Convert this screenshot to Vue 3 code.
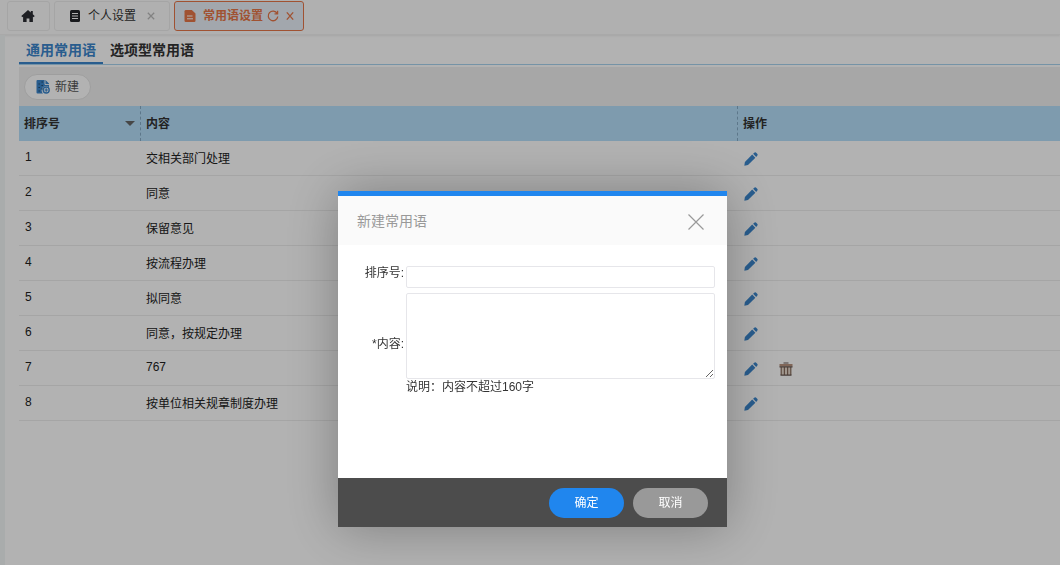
<template>
  <div class="page">
    <nav class="topbar">
      <a href="#" class="page-tab home" aria-label="首页">
        <svg width="14" height="14" viewBox="0 0 14 14">
          <path d="M7 1 L0.3 7 L1.3 8.2 L2.1 7.6 V13 H5.6 V9.4 H8.4 V13 H11.9 V7.6 L12.7 8.2 L13.7 7 L11.8 5.2 V2 H9.8 V3.5 Z" fill="#2b2d33" />
        </svg>
      </a>
      <div class="page-tab">
        <svg class="doc" width="12" height="12" viewBox="0 0 12 12">
          <rect x="1" y="0" width="10" height="12" rx="1.5" fill="#25272b" />
          <path d="M3 3.5H9M3 6H9M3 8.5H9" stroke="#fff" stroke-width="1" />
        </svg>
        <a href="#">个人设置</a>
        <button type="button" class="tab-btn muted" aria-label="关闭">
          <svg width="8" height="8" viewBox="0 0 8 8"><path d="M0.8 0.8L7.2 7.2M7.2 0.8L0.8 7.2" /></svg>
        </button>
      </div>
      <div class="page-tab current">
        <svg class="doc" width="12" height="12" viewBox="0 0 12 12">
          <path d="M2 0H7.8L11.5 3.5V10.8Q11.5 12 10.3 12H1.7Q0.5 12 0.5 10.8V1.2Q0.5 0 2 0Z" fill="#e67648" />
          <path d="M3 6H8.5M3 8.8H9" stroke="#fff" stroke-width="1" />
        </svg>
        <a href="#">常用语设置</a>
        <button type="button" class="tab-btn refresh" aria-label="刷新">
          <svg width="12" height="12" viewBox="0 0 12 12">
            <path d="M10.2 3.5A4.8 4.8 0 1 0 10.8 6.5M10.6 0.8V3.9H7.5" />
          </svg>
        </button>
        <button type="button" class="tab-btn" aria-label="关闭">
          <svg width="8" height="8" viewBox="0 0 8 8"><path d="M0.8 0.4L7.2 7.6M7.2 0.4L0.8 7.6" /></svg>
        </button>
      </div>
    </nav>

    <main class="content">
      <div class="sub-tabs">
        <a
          v-for="tab in tabs"
          :key="tab"
          href="#"
          :class="{ active: tab === activeTab }"
          @click.prevent="activeTab = tab"
        >{{ tab }}</a>
      </div>

      <div class="toolbar">
        <button type="button" class="create" @click="showDialog = true">
          <svg width="14" height="14" viewBox="0 0 14 14">
            <path d="M1.5 0H9.5L13 3.5V7.2A4 4 0 0 0 7 13.6H1.5Q0.5 13.6 0.5 12.6V1Q0.5 0 1.5 0Z" fill="#3b86cc" />
            <path d="M9 0V4.5H13" fill="none" stroke="#fff" stroke-width="0.9" />
            <path d="M2.5 4H3.8M5.5 5.5H6.8M2.5 7.5H3.8M5.5 9H6.8M2.5 11H3.8M5.5 2H6.8" stroke="#20435f" stroke-width="1.2" />
            <circle cx="10.2" cy="10" r="3" fill="#fff" stroke="#3b86cc" stroke-width="1.4" />
            <path d="M10.2 8.3V11.7M8.5 10H11.9" stroke="#3b86cc" stroke-width="1.2" />
          </svg>
          新建
        </button>
      </div>

      <table class="phrases">
        <colgroup>
          <col class="col-order" />
          <col />
          <col class="col-actions" />
        </colgroup>
        <thead>
          <tr>
            <th>
              <div class="sortable">排序号<span class="caret"></span></div>
            </th>
            <th>内容</th>
            <th>操作</th>
          </tr>
        </thead>
        <tbody>
          <tr v-for="row in rows" :key="row.order">
            <td class="latin">{{ row.order }}</td>
            <td :class="{ latin: row.removable }">{{ row.text }}</td>
            <td>
              <div class="actions">
                <button type="button" aria-label="编辑">
                  <svg width="14" height="14" viewBox="0 0 14 14" fill="#3b86cc">
                    <path d="M0.3 13.7L0.9 9.9L8.2 2.6L11.4 5.8L4 13.1Z" />
                    <path d="M9.1 1.8L10.6 0.6Q11.5 0 12.2 0.7L13.4 1.9Q14 2.6 13.4 3.4L12.2 4.9Z" />
                  </svg>
                </button>
                <button v-if="row.removable" type="button" aria-label="删除">
                  <svg width="14" height="14" viewBox="0 0 14 14">
                    <path d="M2 5H12V13H2Z" fill="#e6d8cc" />
                    <path d="M2.2 5V13M5.4 5V13M8.6 5V13M11.8 5V13" stroke="#866b5c" stroke-width="1.2" />
                    <path d="M0.5 2H13.5V4.4H0.5Z" fill="#b8937f" />
                    <path d="M4.5 1H9.5M0.5 4.8H13.5M1.5 13.2H12.5" stroke="#66564f" stroke-width="1.2" />
                  </svg>
                </button>
              </div>
            </td>
          </tr>
        </tbody>
      </table>
    </main>

    <div v-if="showDialog" class="mask">
      <form class="dialog" role="dialog" aria-labelledby="dialog-title" @submit.prevent="save">
        <header class="dialog-head">
          <h2 id="dialog-title">新建常用语</h2>
          <button type="button" class="close" aria-label="关闭" @click="showDialog = false">
            <svg width="18" height="20" viewBox="0 0 18 20">
              <path d="M1.5 3.5L16.5 18.5M16.5 3.5L1.5 18.5" fill="none" stroke="#999" stroke-width="1.2" />
            </svg>
          </button>
        </header>

        <div class="dialog-body">
          <div class="field top">
            <label for="order">排序号:</label>
            <input id="order" v-model="form.order" type="text" />
          </div>
          <div class="field">
            <label for="text">*内容:</label>
            <div>
              <textarea id="text" v-model="form.text" maxlength="160"></textarea>
              <p class="hint">说明：内容不超过160字</p>
            </div>
          </div>
        </div>

        <footer class="dialog-foot">
          <button type="submit" class="confirm">确定</button>
          <button type="button" @click="showDialog = false">取消</button>
        </footer>
      </form>
    </div>
  </div>
</template>

<script setup>
import { reactive, ref } from 'vue'

const tabs = ['通用常用语', '选项型常用语']
const activeTab = ref(tabs[0])
const showDialog = ref(true)

const rows = ref([
  { order: 1, text: '交相关部门处理' },
  { order: 2, text: '同意' },
  { order: 3, text: '保留意见' },
  { order: 4, text: '按流程办理' },
  { order: 5, text: '拟同意' },
  { order: 6, text: '同意，按规定办理' },
  { order: 7, text: '767', removable: true },
  { order: 8, text: '按单位相关规章制度办理' }
])

const form = reactive({ order: '', text: '' })

const save = () => {
  if (!form.text) return
  rows.value.push({ order: form.order || rows.value.length + 1, text: form.text, removable: true })
  showDialog.value = false
}
</script>

<style>
body {
  margin: 0;
  background: #fff;
}
</style>

<style scoped>
* {
  box-sizing: border-box;
}
.page {
  min-height: 100vh;
  display: flex;
  flex-direction: column;
  font: 12px/18px 'Liberation Sans', 'Noto Sans CJK SC', sans-serif;
  color: #333;
}
button,
input,
textarea {
  font: inherit;
  color: inherit;
}
button {
  padding: 0;
  border: none;
  background: none;
  cursor: pointer;
}
a {
  color: inherit;
  text-decoration: none;
}
svg {
  display: block;
  flex: none;
}

/* 顶部页签 */
.topbar {
  display: flex;
  gap: 4px;
  height: 35px;
  padding: 1px 7px 4px;
  background: #fdfdfd;
  border-bottom: 1px solid #f2f2f2;
  box-shadow: 0 1px 2px rgba(0, 0, 0, 0.08);
}
.page-tab {
  display: flex;
  align-items: center;
  height: 30px;
  padding: 0 14px;
  border: 1px solid #ececec;
  border-radius: 3px;
}
.page-tab.home {
  padding: 0 14px 0 13px;
}
.page-tab .doc {
  margin-right: 7px;
}
.page-tab.current {
  padding: 0 9px;
  border-color: #e67648;
  background: #e9f0f8;
  color: #e67648;
  font-weight: bold;
}
.tab-btn {
  margin-left: 7px;
}
.tab-btn.refresh {
  margin-left: 4px;
}
.tab-btn.muted {
  margin-left: 11px;
}
.tab-btn path {
  fill: none;
  stroke: #e67648;
  stroke-width: 1.3;
}
.tab-btn.muted path {
  stroke: #bbb;
}

.content {
  flex: 1;
  padding-left: 14px;
  border-left: 5px solid #f2f6f6;
}
.sub-tabs {
  display: flex;
  height: 30px;
  border-bottom: 1px solid #a8d3ee;
  font-size: 14px;
  font-weight: bold;
  line-height: 30px;
}
.sub-tabs a {
  height: 29px;
  padding: 0 7px;
  border-bottom: 2px solid transparent;
}
.sub-tabs a.active {
  color: #3b86cc;
  border-color: #3b86cc;
}
.toolbar {
  display: flex;
  align-items: center;
  height: 39px;
  margin-top: 2px;
  padding-left: 5px;
  background: #f0f0f0;
}
.create {
  display: flex;
  align-items: center;
  gap: 5px;
  height: 26px;
  padding: 0 11px;
  border: 1px solid #e3e3e3;
  border-radius: 13px;
  background: #fff;
  color: #555;
}

.phrases {
  width: 100%;
  table-layout: fixed;
  border-collapse: separate;
  border-spacing: 0;
}
.col-order {
  width: 121px;
}
.col-actions {
  width: 323px;
}
.phrases th {
  height: 35px;
  padding: 0 5px;
  background: #b5dffa;
  text-align: left;
}
.phrases th + th {
  border-left: 1px dashed #86abc6;
}
.sortable {
  display: flex;
  align-items: center;
  justify-content: space-between;
}
.caret {
  border: 5px solid transparent;
  border-top-color: #666;
  border-bottom-width: 0;
}
.phrases td {
  height: 35px;
  padding: 2px 6px 0;
  border-bottom: 1px solid #ededed;
  color: #222;
}
.phrases td.latin {
  padding: 0 6px 2px;
}
.actions {
  display: flex;
  gap: 21px;
  padding-left: 1px;
}

/* 弹窗 */
.mask {
  position: fixed;
  inset: 0;
  display: flex;
  justify-content: center;
  align-items: flex-start;
  padding: 191px 0 0 5px;
  background: rgba(0, 0, 0, 0.3);
}
.dialog {
  width: 389px;
  border-top: 5px solid #2086ee;
  background: #fff;
  box-shadow: 0 1px 50px rgba(0, 0, 0, 0.3);
}
.dialog-head {
  display: flex;
  justify-content: space-between;
  align-items: center;
  height: 49px;
  padding: 0 22px 0 19px;
  background: #fafafa;
}
.dialog-head h2 {
  margin: 0;
  font-size: 14px;
  font-weight: normal;
  color: #999;
}
.dialog-body {
  display: flex;
  flex-direction: column;
  gap: 5px;
  height: 233px;
  padding: 21px 12px 0;
}
.field {
  display: grid;
  grid-template-columns: 54px 1fr;
  align-items: center;
  column-gap: 2px;
}
.field.top {
  align-items: start;
}
.field label {
  line-height: 14px;
  text-align: right;
}
.field input,
.field textarea {
  display: block;
  width: 100%;
  height: 22px;
  padding: 2px 4px;
  border: 1px solid #e6e6ea;
  border-radius: 2px;
  outline: none;
}
.field textarea {
  height: 86px;
}
.hint {
  margin: 0;
  line-height: 16px;
}
.dialog-foot {
  display: flex;
  justify-content: flex-end;
  align-items: center;
  gap: 9px;
  height: 49px;
  padding-right: 19px;
  background: #4c4c4c;
}
.dialog-foot button {
  width: 75px;
  height: 30px;
  border-radius: 15px;
  background: #999;
  color: #fff;
}
.dialog-foot .confirm {
  background: #2086ee;
}
</style>
